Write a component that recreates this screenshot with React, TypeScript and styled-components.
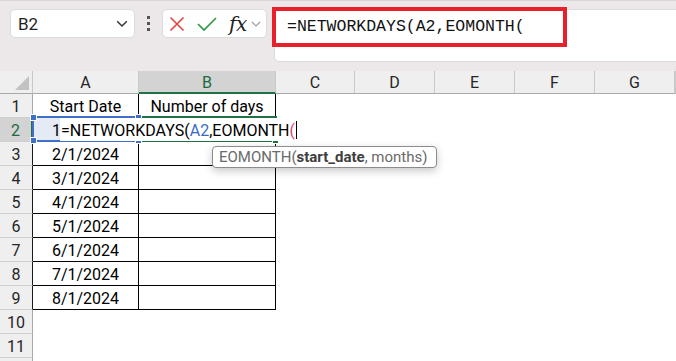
import React from "react";
import styled, { createGlobalStyle } from "styled-components";

const GlobalStyle = createGlobalStyle`
    html, body {
        margin: 0;
        padding: 0;
        background: #ffffff;
        overflow: hidden;
    }
    body {
        font-family: Roboto, "Liberation Sans", sans-serif;
    }
`;

const Page = styled.div`
    width: 676px;
    height: 361px;
    overflow: hidden;
    background: #ffffff;
`;

/* ---------- formula bar ---------- */

const TopBar = styled.div`
    position: relative;
    height: 71px;
    box-sizing: border-box;
    background: #ece8ea;
    border-top: 1px solid #d9d4d6;
    display: flex;
    align-items: flex-start;
    padding: 8px 0 0 10px;
`;

const NameBox = styled.div`
    width: 125px;
    height: 29px;
    box-sizing: border-box;
    background: #ffffff;
    border: 1px solid #dcdcdc;
    border-radius: 5px;
    display: flex;
    align-items: center;
    justify-content: space-between;
    padding: 0 6px 0 7px;
    font-size: 17px;
    color: #1f1f1f;
`;

const DotsHandle = styled.div`
    width: 27px;
    height: 29px;
    display: flex;
    flex-direction: column;
    align-items: center;
    justify-content: center;
    gap: 3px;
`;

const Dot = styled.span`
    width: 3px;
    height: 3px;
    background: #555555;
`;

const ButtonsBox = styled.div`
    width: 105px;
    height: 29px;
    box-sizing: border-box;
    background: #ffffff;
    border: 1px solid #dcdcdc;
    border-radius: 5px;
    display: flex;
    align-items: center;
    padding-left: 6px;
`;

const Fx = styled.span`
    font-family: "DejaVu Serif", "Liberation Serif", serif;
    font-style: italic;
    font-size: 20px;
    color: #222222;
    margin-left: 12px;
    margin-right: 4px;
    letter-spacing: -0.5px;
`;

const FormulaBox = styled.div`
    flex: 1;
    height: 53px;
    margin-left: 7px;
    margin-right: -10px;
    box-sizing: border-box;
    background: #ffffff;
    border: 1px solid #dcdcdc;
    border-radius: 5px;
    padding: 6px 0 0 12px;
    font-family: "Liberation Mono", "DejaVu Sans Mono", monospace;
    font-size: 16.5px;
    color: #111111;
    line-height: 22px;
`;

const Highlight = styled.div`
    position: absolute;
    left: 272px;
    top: 6px;
    width: 295px;
    height: 40px;
    box-sizing: border-box;
    border: 4px solid #e8202a;
`;

/* ---------- sheet ---------- */

const Sheet = styled.div`
    position: relative;
    display: grid;
    grid-template-columns: 33px 106px 137px 79px 80px 80px 80px 80px 1fr;
    grid-template-rows: 23px;
    grid-auto-rows: 24px;
    font-size: 16px;
    color: #000000;
`;

const Corner = styled.div`
    position: relative;
    box-sizing: border-box;
    background: #efefef;
    border-right: 1px solid #c8c8c8;
    border-bottom: 1px solid #a8a8a8;
    &::after {
        content: "";
        position: absolute;
        right: 3px;
        bottom: 3px;
        border-left: 14px solid transparent;
        border-bottom: 14px solid #c2c2c2;
    }
`;

const ColHeader = styled.div<{ $active?: boolean }>`
    box-sizing: border-box;
    display: flex;
    align-items: center;
    justify-content: center;
    background: ${(p) => (p.$active ? "#d3d3d3" : "#efefef")};
    color: ${(p) => (p.$active ? "#1d6a40" : "#262626")};
    border-right: 1px solid #c8c8c8;
    border-bottom: ${(p) =>
        p.$active ? "2px solid #1f7244" : "1px solid #a8a8a8"};
    padding-top: ${(p) => (p.$active ? "1px" : "0")};
`;

const RowHeader = styled.div<{ $active?: boolean; $edge?: boolean }>`
    box-sizing: border-box;
    display: flex;
    align-items: center;
    justify-content: center;
    background: ${(p) => (p.$active ? "#d3d3d3" : "#efefef")};
    color: ${(p) => (p.$active ? "#1d6a40" : "#262626")};
    border-bottom: 1px solid #cfcfcf;
    border-right: ${(p) =>
        p.$active
            ? "2px solid #1f7244"
            : p.$edge
            ? "1px solid #1a1a1a"
            : "1px solid #a8a8a8"};
    padding-top: 1px;
`;

const Cell = styled.div<{ $right?: boolean; $bottom?: boolean; $tint?: boolean }>`
    box-sizing: border-box;
    display: flex;
    align-items: center;
    justify-content: center;
    white-space: nowrap;
    overflow: hidden;
    padding-top: 1px;
    background: ${(p) => (p.$tint ? "#e4ebf6" : "transparent")};
    border-right: 1px solid ${(p) => (p.$right ? "#000000" : "transparent")};
    border-bottom: 1px solid ${(p) => (p.$bottom ? "#000000" : "transparent")};
`;

const RefBox = styled.div`
    position: absolute;
    left: 32px;
    top: 45px;
    width: 108px;
    height: 26px;
    box-sizing: border-box;
    border: 2px solid #3f6fc6;
    z-index: 2;
`;

const Handle = styled.span<{ $color: string; $x: "l" | "r"; $y: "t" | "b" }>`
    position: absolute;
    width: 5px;
    height: 5px;
    background: ${(p) => p.$color};
    border: 1px solid #ffffff;
    box-sizing: content-box;
    ${(p) => (p.$x === "l" ? "left: -4px;" : "right: -4px;")}
    ${(p) => (p.$y === "t" ? "top: -4px;" : "bottom: -4px;")}
`;

const ActiveBox = styled.div`
    position: absolute;
    left: 138px;
    top: 45px;
    width: 139px;
    height: 26px;
    box-sizing: border-box;
    border: 2px solid #1f7244;
    z-index: 1;
`;

const Editor = styled.div`
    position: absolute;
    left: 60px;
    top: 47px;
    width: 238px;
    height: 22px;
    background: #ffffff;
    z-index: 3;
    display: flex;
    align-items: center;
    padding-left: 1px;
    padding-top: 1px;
    white-space: nowrap;
    font-size: 16px;
    color: #000000;
`;

const RefText = styled.span`
    color: #3a6cc4;
`;

const ParenText = styled.span`
    color: #e0406a;
`;

const Caret = styled.span`
    display: inline-block;
    width: 1px;
    height: 18px;
    background: #000000;
    margin-left: 1px;
`;

const Tooltip = styled.div`
    position: absolute;
    left: 212px;
    top: 75px;
    width: 225px;
    height: 22px;
    box-sizing: border-box;
    background: #ffffff;
    border: 1px solid #8c8c8c;
    border-radius: 4px;
    box-shadow: 0 3px 8px rgba(0, 0, 0, 0.22);
    z-index: 4;
    display: flex;
    align-items: center;
    padding-left: 6px;
    font-size: 15px;
    color: #6a6a6a;
    white-space: nowrap;
`;

const ArgBold = styled.b`
    color: #404040;
    font-weight: 700;
`;

const columns = ["A", "B", "C", "D", "E", "F", "G", ""];

const tableRows: [string, string][] = [
    ["Start Date", "Number of days"],
    ["1/1/2024", ""],
    ["2/1/2024", ""],
    ["3/1/2024", ""],
    ["4/1/2024", ""],
    ["5/1/2024", ""],
    ["6/1/2024", ""],
    ["7/1/2024", ""],
    ["8/1/2024", ""],
];

const Chevron = ({ color, size }: { color: string; size: number }) => (
    <svg width={size} height={size * 0.6} viewBox="0 0 10 6">
        <path d="M1 1 L5 5 L9 1" fill="none" stroke={color} strokeWidth="1.2" />
    </svg>
);

const App = () => {
    const visibleRows = 11;
    const rows = [];
    for (let r = 1; r <= visibleRows + 1; r++) {
        const data = tableRows[r - 1];
        const inTable = !!data;
        rows.push(
            <React.Fragment key={r}>
                <RowHeader $active={r === 2} $edge={inTable && r > 2}>
                    {r <= visibleRows ? r : ""}
                </RowHeader>
                <Cell $right={inTable} $bottom={inTable} $tint={r === 2}>
                    {data ? data[0] : ""}
                </Cell>
                <Cell $right={inTable} $bottom={inTable}>
                    {data ? data[1] : ""}
                </Cell>
                {columns.slice(2).map((c, i) => (
                    <Cell key={i} />
                ))}
            </React.Fragment>
        );
    }

    return (
        <Page>
            <GlobalStyle />
            <TopBar>
                <NameBox>
                    <span>B2</span>
                    <Chevron color="#333333" size={12} />
                </NameBox>
                <DotsHandle>
                    <Dot />
                    <Dot />
                    <Dot />
                </DotsHandle>
                <ButtonsBox>
                    <svg width="16" height="16" viewBox="0 0 16 16">
                        <path
                            d="M1.5 1.5 L14.5 14.5 M14.5 1.5 L1.5 14.5"
                            stroke="#e2423f"
                            strokeWidth="1.6"
                            fill="none"
                        />
                    </svg>
                    <svg
                        width="20"
                        height="16"
                        viewBox="0 0 20 16"
                        style={{ marginLeft: 12 }}
                    >
                        <path
                            d="M1 8 L7 14 L19 2"
                            stroke="#2f9a48"
                            strokeWidth="1.7"
                            fill="none"
                        />
                    </svg>
                    <Fx>fx</Fx>
                    <Chevron color="#a0a0a0" size={10} />
                </ButtonsBox>
                <FormulaBox>=NETWORKDAYS(A2,EOMONTH(</FormulaBox>
                <Highlight />
            </TopBar>

            <Sheet>
                <Corner />
                {columns.map((c, i) => (
                    <ColHeader key={i} $active={c === "B"}>
                        {c}
                    </ColHeader>
                ))}
                {rows}

                <RefBox>
                    <Handle $color="#3f6fc6" $x="l" $y="t" />
                    <Handle $color="#3f6fc6" $x="r" $y="t" />
                    <Handle $color="#3f6fc6" $x="l" $y="b" />
                    <Handle $color="#3f6fc6" $x="r" $y="b" />
                </RefBox>
                <ActiveBox>
                    <Handle $color="#1f7244" $x="r" $y="b" />
                </ActiveBox>
                <Editor>
                    =NETWORKDAYS(<RefText>A2</RefText>,EOMONTH
                    <ParenText>(</ParenText>
                    <Caret />
                </Editor>
                <Tooltip>
                    EOMONTH(<ArgBold>start_date</ArgBold>, months)
                </Tooltip>
            </Sheet>
        </Page>
    );
};

export default App;
